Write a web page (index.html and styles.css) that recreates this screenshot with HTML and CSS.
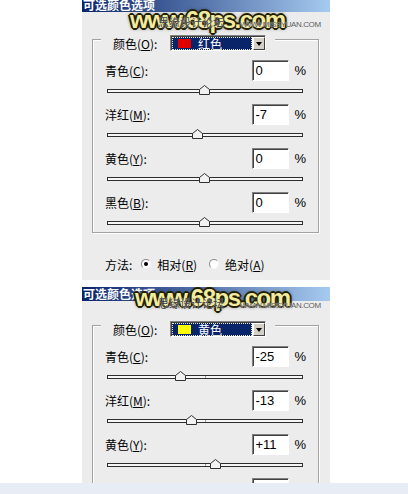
FILE: index.html
```html
<!DOCTYPE html>
<html lang="zh-CN">

<head>
	<meta charset="UTF-8">
	<meta name="viewport" content="width=device-width, initial-scale=1.0">
	<title>可选颜色选项</title>
	<link rel="stylesheet" href="styles.css">
</head>

<body>
	<div class="dialog dialog-a">
		<div class="titlebar">可选颜色选项</div>
		<div class="group">
			<div class="legend">
				<span class="legend-label">颜色(<u>O</u>):</span>
				<div class="select">
					<div class="select-value"><span class="swatch red"></span>红色</div>
					<div class="select-btn"><span class="arrow"></span></div>
				</div>
			</div>
			<div class="rows">
				<div class="row">
					<div class="line"><span class="label">青色(<u>C</u>):</span><span class="field">0</span><span class="pct">%</span></div>
					<div class="slider">
						<div class="track"></div>
						<svg class="thumb" style="left: 50%" width="11" height="10" viewBox="0 0 11 10"><path d="M0.5 9.5V4.5L5.5 0.5L10.5 4.5V9.5Z" /></svg>
					</div>
				</div>
				<div class="row">
					<div class="line"><span class="label">洋红(<u>M</u>):</span><span class="field">-7</span><span class="pct">%</span></div>
					<div class="slider">
						<div class="track"></div>
						<svg class="thumb" style="left: 46.5%" width="11" height="10" viewBox="0 0 11 10"><path d="M0.5 9.5V4.5L5.5 0.5L10.5 4.5V9.5Z" /></svg>
					</div>
				</div>
				<div class="row">
					<div class="line"><span class="label">黄色(<u>Y</u>):</span><span class="field">0</span><span class="pct">%</span></div>
					<div class="slider">
						<div class="track"></div>
						<svg class="thumb" style="left: 50%" width="11" height="10" viewBox="0 0 11 10"><path d="M0.5 9.5V4.5L5.5 0.5L10.5 4.5V9.5Z" /></svg>
					</div>
				</div>
				<div class="row">
					<div class="line"><span class="label">黑色(<u>B</u>):</span><span class="field">0</span><span class="pct">%</span></div>
					<div class="slider">
						<div class="track"></div>
						<svg class="thumb" style="left: 50%" width="11" height="10" viewBox="0 0 11 10"><path d="M0.5 9.5V4.5L5.5 0.5L10.5 4.5V9.5Z" /></svg>
					</div>
				</div>
			</div>
		</div>
		<div class="method">
			<span>方法:</span>
			<span class="radio checked"></span><span class="radio-text">相对(<u>R</u>)</span>
			<span class="radio"></span><span class="radio-text">绝对(<u>A</u>)</span>
		</div>
		<div class="wm-big">www.68ps.com</div>
		<div class="wm-small">思缘设计论坛<span>WWW.MISSYUAN.COM</span></div>
	</div>

	<div class="dialog dialog-b">
		<div class="titlebar">可选颜色选项</div>
		<div class="group">
			<div class="legend">
				<span class="legend-label">颜色(<u>O</u>):</span>
				<div class="select">
					<div class="select-value"><span class="swatch yellow"></span>黄色</div>
					<div class="select-btn"><span class="arrow"></span></div>
				</div>
			</div>
			<div class="rows">
				<div class="row">
					<div class="line"><span class="label">青色(<u>C</u>):</span><span class="field">-25</span><span class="pct">%</span></div>
					<div class="slider">
						<div class="track"><span class="tick"></span></div>
						<svg class="thumb" style="left: 37.5%" width="11" height="10" viewBox="0 0 11 10"><path d="M0.5 9.5V4.5L5.5 0.5L10.5 4.5V9.5Z" /></svg>
					</div>
				</div>
				<div class="row">
					<div class="line"><span class="label">洋红(<u>M</u>):</span><span class="field">-13</span><span class="pct">%</span></div>
					<div class="slider">
						<div class="track"><span class="tick"></span></div>
						<svg class="thumb" style="left: 43.5%" width="11" height="10" viewBox="0 0 11 10"><path d="M0.5 9.5V4.5L5.5 0.5L10.5 4.5V9.5Z" /></svg>
					</div>
				</div>
				<div class="row">
					<div class="line"><span class="label">黄色(<u>Y</u>):</span><span class="field">+11</span><span class="pct">%</span></div>
					<div class="slider">
						<div class="track"><span class="tick"></span></div>
						<svg class="thumb" style="left: 55.5%" width="11" height="10" viewBox="0 0 11 10"><path d="M0.5 9.5V4.5L5.5 0.5L10.5 4.5V9.5Z" /></svg>
					</div>
				</div>
				<div class="row">
					<div class="line"><span class="label">黑色(<u>B</u>):</span><span class="field"></span><span class="pct">%</span></div>
				</div>
			</div>
		</div>
		<div class="wm-big">www.68ps.com</div>
		<div class="wm-small">思缘设计论坛<span>WWW.MISSYUAN.COM</span></div>
	</div>

	<div class="footer"></div>
</body>

</html>
```

FILE: styles.css
```css
body {
	margin: 0;
	background-color: #fff;
	font-family: "Noto Sans CJK SC", sans-serif;
	font-size: 12px;
	color: #000;
}

u {
	text-decoration-thickness: 1px;
	text-underline-offset: 1px;
}

.dialog {
	position: relative;
	width: 248px;
	margin-left: 82px;
	background-color: #ececec;
	overflow: hidden;
}

.dialog-a {
	margin-top: -2px;
	height: 282px;
}

.dialog-b {
	margin-top: 7px;
	height: 196px;
}

.titlebar {
	height: 14px;
	line-height: 14px;
	padding-left: 1px;
	background: linear-gradient(to right, #0a246a, #a6caf0);
	color: #fff;
	font-weight: bold;
}

/* group box */
.group {
	width: 225px;
	margin: 27px 0 0 10px;
	border: 1px solid #a2a2a2;
	box-shadow: inset 1px 1px 0 #fff, 1px 1px 0 #fff;
}

.dialog-b .group {
	margin-top: 24px;
}

.legend {
	display: flex;
	align-items: center;
	box-sizing: border-box;
	width: 174px;
	height: 16px;
	margin: -5px 0 0 8px;
	padding-left: 12px;
	background-color: #ececec;
}

.legend-label {
	width: 57px;
}

.select {
	display: flex;
	box-sizing: border-box;
	width: 96px;
	height: 16px;
	padding: 1px 0 0 1px;
	border: 1px solid;
	border-color: #808080 #fff #fff #808080;
	box-shadow: inset 1px 1px 0 #404040;
	background-color: #fff;
}

.select-value {
	flex: 1;
	display: flex;
	align-items: center;
	padding-left: 6px;
	margin-right: 1px;
	background-color: #0a246a;
	outline: 1px dotted #e8e8c0;
	outline-offset: -1px;
	color: #fff;
	line-height: 13px;
}

.swatch {
	width: 13px;
	height: 9px;
	margin-right: 7px;
}

.red {
	background-color: #e00000;
}

.yellow {
	background-color: #ffff00;
}

.select-btn {
	display: flex;
	align-items: center;
	justify-content: center;
	box-sizing: border-box;
	width: 12px;
	background-color: #d4d0c8;
	border: 1px solid;
	border-color: #fff #404040 #404040 #fff;
}

.arrow {
	width: 0;
	height: 0;
	border-left: 3px solid transparent;
	border-right: 3px solid transparent;
	border-top: 4px solid #000;
}

/* slider rows */
.rows {
	display: flex;
	flex-direction: column;
	gap: 4px;
	margin-top: 9px;
}

.line {
	display: flex;
	align-items: center;
	height: 21px;
	padding: 0 12px;
}

.label {
	flex: 1;
}

.field {
	box-sizing: border-box;
	width: 37px;
	height: 21px;
	padding-left: 2px;
	border: 1px solid;
	border-color: #808080 #fff #fff #808080;
	box-shadow: inset 1px 1px 0 #404040;
	background-color: #fff;
	font: 13px/19px "Liberation Sans", sans-serif;
}

.pct {
	margin-left: 5px;
	font: 13px "Liberation Sans", sans-serif;
}

.slider {
	position: relative;
	box-sizing: border-box;
	height: 19px;
	padding-top: 8px;
	margin: 0 15px 0 14px;
}

.track {
	position: relative;
	box-sizing: border-box;
	height: 4px;
	border: 1px solid #2e2e2e;
	background-color: #f6f6f6;
}

.tick {
	position: absolute;
	left: 50%;
	top: 0;
	width: 1px;
	height: 2px;
	background-color: #9a9a9a;
}

.thumb {
	position: absolute;
	top: 4px;
	margin-left: -6px;
}

.thumb path {
	fill: #f2f2f2;
	stroke: #303030;
	stroke-width: 1;
}

/* method */
.method {
	display: flex;
	align-items: center;
	height: 18px;
	margin: 22px 0 0 23px;
}

.radio {
	position: relative;
	box-sizing: border-box;
	width: 10px;
	height: 10px;
	margin-left: 9px;
	border: 1px solid;
	border-color: #8a8a8a #f4f4f4 #f4f4f4 #8a8a8a;
	border-radius: 50%;
	background-color: #fff;
}

.radio + .radio-text + .radio {
	margin-left: 12px;
}

.checked::after {
	content: "";
	position: absolute;
	left: 2px;
	top: 2px;
	width: 4px;
	height: 4px;
	border-radius: 50%;
	background-color: #000;
}

.radio-text {
	margin-left: 6px;
}

/* watermark */
.wm-big {
	position: absolute;
	left: 48px;
	top: 10px;
	font: bold 24px/24px "Liberation Sans", sans-serif;
	letter-spacing: -1.5px;
	color: #f2eba0;
	white-space: nowrap;
	text-shadow: -1px -1px 0 #1e1c00, 1px -1px 0 #1e1c00, -1px 1px 0 #1e1c00, 1px 1px 0 #1e1c00,
		0 -2px 0 #2a2700, 0 2px 0 #2a2700, -2px 0 0 #2a2700, 2px 0 0 #2a2700, 0 0 4px #000;
}

.wm-small {
	position: absolute;
	left: 76px;
	top: 18px;
	line-height: 12px;
	font-size: 11px;
	color: #3a3a3a;
	white-space: nowrap;
	text-shadow: 0 0 1px #fff;
}

.wm-small span {
	margin-left: 16px;
	font: 8px "Liberation Sans", sans-serif;
	letter-spacing: -0.4px;
	color: #555;
}

.dialog-b .wm-big {
	left: 53px;
	top: -1px;
}

.dialog-b .wm-small {
	top: 10px;
}

.footer {
	height: 11px;
	background-color: #e8ecf5;
}
```
